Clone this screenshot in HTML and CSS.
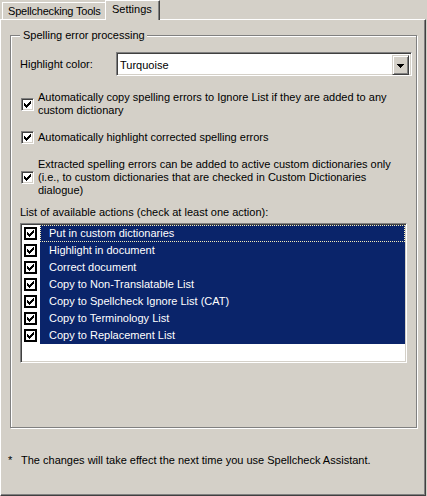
FILE: index.html
```html
<!DOCTYPE html>
<html>
<head>
<meta charset="utf-8">
<title>Settings</title>
<link rel="stylesheet" href="styles.css">
</head>
<body>
<div class="tabs">
  <div class="tab">Spellchecking Tools</div>
  <div class="tab active">Settings</div>
</div>
<div class="panel">
  <fieldset class="group">
    <legend>Spelling error processing</legend>
    <div class="color-row">
      <span class="lbl">Highlight color:</span>
      <div class="combo">
        <span class="combo-text">Turquoise</span>
        <span class="combo-btn"><svg width="7" height="4" viewBox="0 0 7 4" shape-rendering="crispEdges"><path d="M0 0h7v1h-7z M1 1h5v1h-5z M2 2h3v1h-3z M3 3h1v1h-1z" fill="#000"/></svg></span>
      </div>
    </div>
    <div class="check r1">
      <span class="cb"><svg width="7" height="7" viewBox="0 0 7 7" shape-rendering="crispEdges"><path d="M0 2h1v3h-1z M1 3h1v3h-1z M2 4h1v3h-1z M3 3h1v3h-1z M4 2h1v3h-1z M5 1h1v3h-1z M6 0h1v3h-1z" fill="#000"/></svg></span>
      <span class="ctext">Automatically copy spelling errors to Ignore List if they are added to any<br>custom dictionary</span>
    </div>
    <div class="check r2">
      <span class="cb"><svg width="7" height="7" viewBox="0 0 7 7" shape-rendering="crispEdges"><path d="M0 2h1v3h-1z M1 3h1v3h-1z M2 4h1v3h-1z M3 3h1v3h-1z M4 2h1v3h-1z M5 1h1v3h-1z M6 0h1v3h-1z" fill="#000"/></svg></span>
      <span class="ctext">Automatically highlight corrected spelling errors</span>
    </div>
    <div class="check r3">
      <span class="cb"><svg width="7" height="7" viewBox="0 0 7 7" shape-rendering="crispEdges"><path d="M0 2h1v3h-1z M1 3h1v3h-1z M2 4h1v3h-1z M3 3h1v3h-1z M4 2h1v3h-1z M5 1h1v3h-1z M6 0h1v3h-1z" fill="#000"/></svg></span>
      <span class="ctext">Extracted spelling errors can be added to active custom dictionaries only<br>(i.e., to custom dictionaries that are checked in Custom Dictionaries<br>dialogue)</span>
    </div>
    <div class="list-label">List of available actions (check at least one action):</div>
    <div class="listbox">
      <div class="item"><span class="lcb"><svg width="7" height="7" viewBox="0 0 7 7" shape-rendering="crispEdges"><path d="M0 2h1v3h-1z M1 3h1v3h-1z M2 4h1v3h-1z M3 3h1v3h-1z M4 2h1v3h-1z M5 1h1v3h-1z M6 0h1v3h-1z" fill="#000"/></svg></span><span class="ilabel focus">Put in custom dictionaries</span></div>
      <div class="item"><span class="lcb"><svg width="7" height="7" viewBox="0 0 7 7" shape-rendering="crispEdges"><path d="M0 2h1v3h-1z M1 3h1v3h-1z M2 4h1v3h-1z M3 3h1v3h-1z M4 2h1v3h-1z M5 1h1v3h-1z M6 0h1v3h-1z" fill="#000"/></svg></span><span class="ilabel">Highlight in document</span></div>
      <div class="item"><span class="lcb"><svg width="7" height="7" viewBox="0 0 7 7" shape-rendering="crispEdges"><path d="M0 2h1v3h-1z M1 3h1v3h-1z M2 4h1v3h-1z M3 3h1v3h-1z M4 2h1v3h-1z M5 1h1v3h-1z M6 0h1v3h-1z" fill="#000"/></svg></span><span class="ilabel">Correct document</span></div>
      <div class="item"><span class="lcb"><svg width="7" height="7" viewBox="0 0 7 7" shape-rendering="crispEdges"><path d="M0 2h1v3h-1z M1 3h1v3h-1z M2 4h1v3h-1z M3 3h1v3h-1z M4 2h1v3h-1z M5 1h1v3h-1z M6 0h1v3h-1z" fill="#000"/></svg></span><span class="ilabel">Copy to Non-Translatable List</span></div>
      <div class="item"><span class="lcb"><svg width="7" height="7" viewBox="0 0 7 7" shape-rendering="crispEdges"><path d="M0 2h1v3h-1z M1 3h1v3h-1z M2 4h1v3h-1z M3 3h1v3h-1z M4 2h1v3h-1z M5 1h1v3h-1z M6 0h1v3h-1z" fill="#000"/></svg></span><span class="ilabel">Copy to Spellcheck Ignore List (CAT)</span></div>
      <div class="item"><span class="lcb"><svg width="7" height="7" viewBox="0 0 7 7" shape-rendering="crispEdges"><path d="M0 2h1v3h-1z M1 3h1v3h-1z M2 4h1v3h-1z M3 3h1v3h-1z M4 2h1v3h-1z M5 1h1v3h-1z M6 0h1v3h-1z" fill="#000"/></svg></span><span class="ilabel">Copy to Terminology List</span></div>
      <div class="item"><span class="lcb"><svg width="7" height="7" viewBox="0 0 7 7" shape-rendering="crispEdges"><path d="M0 2h1v3h-1z M1 3h1v3h-1z M2 4h1v3h-1z M3 3h1v3h-1z M4 2h1v3h-1z M5 1h1v3h-1z M6 0h1v3h-1z" fill="#000"/></svg></span><span class="ilabel">Copy to Replacement List</span></div>
    </div>
  </fieldset>
  <p class="note"><span class="star">*</span>The changes will take effect the next time you use Spellcheck Assistant.</p>
</div>
</body>
</html>
```

FILE: styles.css
```css
* { box-sizing: border-box; }
html, body { margin: 0; padding: 0; }
body {
  background: #d4d0c8;
  font-family: "Liberation Sans", Arial, sans-serif;
  font-size: 11px;
  color: #000;
  width: 427px;
  height: 496px;
  overflow: hidden;
}

/* tabs */
.tabs {
  display: flex;
  align-items: flex-end;
  height: 19px;
  padding-left: 2px;
}
.tab {
  height: 17px;
  width: 104px;
  padding-left: 5px;
  line-height: 16px;
  letter-spacing: -0.2px;
  border-top: 1px solid #fff;
  border-left: 1px solid #fff;
  white-space: nowrap;
}
.tab.active {
  position: relative;
  z-index: 1;
  height: 20px;
  width: 55px;
  margin-left: -1px;
  margin-bottom: -1px;
  padding-left: 6px;
  letter-spacing: 0;
  background: #d4d0c8;
  border-right: 1px solid #404040;
  box-shadow: inset -1px 0 #808080;
}

/* panel */
.panel {
  width: 426px;
  height: 477px;
  border-top: 1px solid #fff;
  border-left: 1px solid #fff;
  border-right: 1px solid #404040;
  border-bottom: 1px solid #404040;
  box-shadow: inset -1px -1px #808080;
  padding: 9px 0 0 9px;
}

.group {
  margin: 0;
  min-width: 0;
  width: 407px;
  height: 399px;
  border: 1px solid #808080;
  box-shadow: inset 1px 1px #fff, 1px 1px #fff;
  padding: 0 0 0 9px;
}
.group legend {
  padding: 0 2px 0 3px;
  margin-left: 0;
  line-height: 13px;
  background: #d4d0c8;
}

/* highlight color row */
.color-row {
  display: flex;
  align-items: center;
  height: 24px;
  margin-top: 10px;
}
.lbl { width: 96px; flex: none; }
.combo {
  display: flex;
  width: 296px;
  height: 24px;
  padding: 1px;
  background: #fff;
  border: 1px solid;
  border-color: #808080 #fff #fff #808080;
  box-shadow: inset 1px 1px #404040, inset -1px -1px #d4d0c8;
}
.combo-text {
  flex: 1;
  padding-left: 2px;
  margin-top: 1px;
  line-height: 20px;
}
.combo-btn {
  display: flex;
  align-items: center;
  justify-content: center;
  width: 17px;
  height: 20px;
  margin-top: 1px;
  margin-right: 1px;
  background: #d4d0c8;
  border: 1px solid;
  border-color: #d4d0c8 #404040 #404040 #d4d0c8;
  box-shadow: inset 1px 1px #fff, inset -1px -1px #808080;
}
.combo-btn svg { display: block; margin-top: 1px; }

/* checkboxes */
.check {
  display: flex;
  align-items: center;
  padding-left: 1px;
  line-height: 13px;
}
.r1 { margin-top: 15px; }
.r2 { margin-top: 14px; }
.r3 { margin-top: 14px; }
.cb {
  flex: none;
  display: flex;
  align-items: center;
  justify-content: center;
  width: 13px;
  height: 13px;
  margin-right: 4px;
  background: #fff;
  border: 1px solid;
  border-color: #808080 #fff #fff #808080;
  box-shadow: inset 1px 1px #404040, inset -1px -1px #d4d0c8;
}
.cb svg { display: block; }

.list-label {
  margin-top: 9px;
  line-height: 13px;
}

/* listbox */
.listbox {
  margin-top: 4px;
  width: 387px;
  height: 140px;
  padding: 1px;
  background: #fff;
  border: 1px solid;
  border-color: #808080 #fff #fff #808080;
  box-shadow: inset 1px 1px #404040, inset -1px -1px #d4d0c8;
}
.item {
  display: flex;
  height: 17px;
}
.lcb {
  flex: none;
  display: flex;
  align-items: center;
  justify-content: center;
  width: 13px;
  height: 13px;
  margin: 2px 3px 0 2px;
  background: #fff;
  border: 2px solid #000;
}
.lcb svg { display: block; }
.ilabel {
  flex: 1;
  background: #0a246a;
  color: #fff;
  padding-left: 9px;
  line-height: 17px;
  white-space: nowrap;
}
.ilabel.focus {
  outline: 1px dotted #f4ecb8;
  outline-offset: -1px;
}

/* footnote */
.note {
  margin: 26px 0 0 -2px;
  line-height: 13px;
  white-space: nowrap;
}
.star {
  display: inline-block;
  width: 13px;
}
```
